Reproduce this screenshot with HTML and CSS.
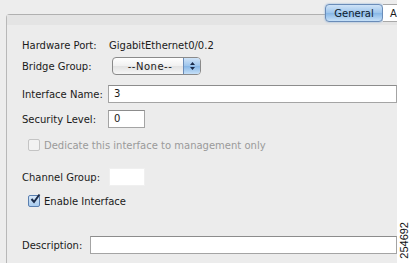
FILE: index.html
```html
<!DOCTYPE html>
<html lang="en">
<head>
    <meta charset="UTF-8">
    <title>Edit Interface</title>
    <link rel="stylesheet" href="styles.css">
</head>
<body>
    <div class="window">
        <div class="tabs">
            <span class="tab active">General</span>
            <span class="tab next">A</span>
        </div>
        <div class="panel">
            <div class="band"></div>
            <div class="row row-port">
                <span class="label">Hardware Port:</span>
                <span class="value">GigabitEthernet0/0.2</span>
            </div>
            <div class="row row-bridge">
                <span class="label">Bridge Group:</span>
                <div class="select">
                    <span class="select-text">--None--</span>
                    <span class="select-arrows">
                        <svg width="7" height="10" viewBox="0 0 7 10">
                            <path d="M1 4 L3.5 1 L6 4 Z M1 6 L3.5 9 L6 6 Z" fill="#1a2a4a"/>
                        </svg>
                    </span>
                </div>
            </div>
            <div class="row row-name">
                <span class="label">Interface Name:</span>
                <div class="field field-wide">3</div>
            </div>
            <div class="row row-level">
                <span class="label">Security Level:</span>
                <div class="field field-small">0</div>
            </div>
            <div class="row row-mgmt">
                <span class="checkbox disabled"></span>
                <span class="check-label disabled-text">Dedicate this interface to management only</span>
            </div>
            <div class="row row-channel">
                <span class="label">Channel Group:</span>
                <div class="field field-small channel"></div>
            </div>
            <div class="row row-enable">
                <span class="checkbox checked">
                    <svg width="12" height="12" viewBox="0 0 12 12">
                        <path d="M2.5 6 L5 9 L10.5 1.5" fill="none" stroke="#1b2a48" stroke-width="2"/>
                    </svg>
                </span>
                <span class="check-label">Enable Interface</span>
            </div>
            <div class="row row-desc">
                <span class="label">Description:</span>
                <div class="field field-wide"></div>
            </div>
        </div>
    </div>
    <div class="strip">
        <span class="figure-id">254692</span>
    </div>
</body>
</html>
```

FILE: styles.css
```css
body {
    margin: 0;
    width: 411px;
    height: 263px;
    overflow: hidden;
    display: flex;
    font-family: "DejaVu Sans", "Lucida Grande", sans-serif;
    font-size: 10px;
    color: #1a1a1a;
    background-color: #ededed;
}

.window {
    width: 397px;
    position: relative;
    overflow: hidden;
    padding: 14px 0 0 6px;
    box-sizing: border-box;
}

.tabs {
    position: absolute;
    top: 4px;
    left: 325px;
    display: flex;
    z-index: 2;
}

.tab {
    display: inline-block;
    height: 18px;
    line-height: 17px;
    box-sizing: border-box;
    background: #fff;
    border: 1px solid #a8a8a8;
    border-left: none;
}

.tab.next {
    width: 14px;
    padding-left: 7px;
    border-right: none;
}

.tab.active {
    width: 58px;
    padding: 0;
    text-align: center;
    color: #0e1a2c;
    border: 1px solid #6a8cb8;
    border-radius: 4px;
    background: linear-gradient(#cfe3f7, #9cc4ec 50%, #86b6e6 51%, #c6e0f8);
    box-shadow: 0 0 2px #7aa7d8;
}

.panel {
    height: 100%;
    border-top: 1px solid #b0b0b0;
    border-left: 1px solid #b8b8b8;
    border-top-left-radius: 4px;
    background-color: #ececec;
    display: flex;
    flex-direction: column;
}

.band {
    height: 10px;
    margin-bottom: 15px;
    background-color: #e4e4e4;
}

.row {
    display: flex;
    align-items: center;
    padding-left: 15px;
}

.label {
    width: 86px;
    flex-shrink: 0;
}

.value {
    padding-left: 1px;
}

.row-bridge {
    margin-top: 6px;
}

.select {
    margin-left: 4px;
    width: 89px;
    height: 18px;
    box-sizing: border-box;
    border: 1px solid #8a8a8a;
    border-radius: 4px;
    background: linear-gradient(#ffffff, #f0f0f0 50%, #e2e2e2 51%, #f6f6f6);
    display: flex;
    align-items: center;
    overflow: hidden;
}

.select-text {
    flex: 1;
    text-align: center;
    padding-left: 4px;
    letter-spacing: 0.5px;
}

.select-arrows {
    width: 16px;
    height: 16px;
    display: flex;
    align-items: center;
    justify-content: center;
    border-left: 1px solid #6a8cb8;
    background: linear-gradient(#cfe3f7, #9cc4ec 50%, #86b6e6 51%, #c6e0f8);
}

.field {
    height: 18px;
    box-sizing: border-box;
    background: #fff;
    border: 1px solid #a4a4a4;
    border-top-color: #8c8c8c;
    padding-left: 5px;
    line-height: 16px;
}

.field-wide {
    flex: 1;
}

.field-small {
    width: 37px;
}

.row-name {
    margin-top: 10px;
}

.row-level {
    margin-top: 7px;
}

.row-mgmt {
    margin-top: 11px;
    padding-left: 21px;
}

.checkbox {
    width: 12px;
    height: 12px;
    box-sizing: border-box;
    border: 1px solid #8f8f8f;
    border-radius: 2px;
    background: linear-gradient(#ffffff, #e8e8e8);
    margin-right: 4px;
    display: flex;
    align-items: center;
    justify-content: center;
    position: relative;
}

.checkbox.disabled {
    border-color: #c4c4c4;
    background: #f2f2f2;
}

.checkbox.checked {
    border-color: #5a7fb0;
    background: linear-gradient(#d8e8f8, #a8cbee);
}

.checkbox.checked svg {
    position: absolute;
    top: -3px;
    left: 0;
}

.disabled-text {
    color: #9a9a9a;
}

.row-channel {
    margin-top: 17px;
}

.channel {
    margin-left: 1px;
    border-color: #f0f0f0;
    width: 36px;
}

.row-enable {
    margin-top: 9px;
    padding-left: 21px;
}

.row-desc {
    margin-top: 29px;
}

.row-desc .label {
    width: 68px;
}

.strip {
    flex: 1;
    background: #fff;
    display: flex;
    align-items: flex-end;
    justify-content: center;
    padding-bottom: 4px;
}

.figure-id {
    writing-mode: vertical-rl;
    transform: rotate(180deg);
    font-family: "Liberation Sans", Arial, sans-serif;
    font-size: 11px;
    color: #111;
}
```
